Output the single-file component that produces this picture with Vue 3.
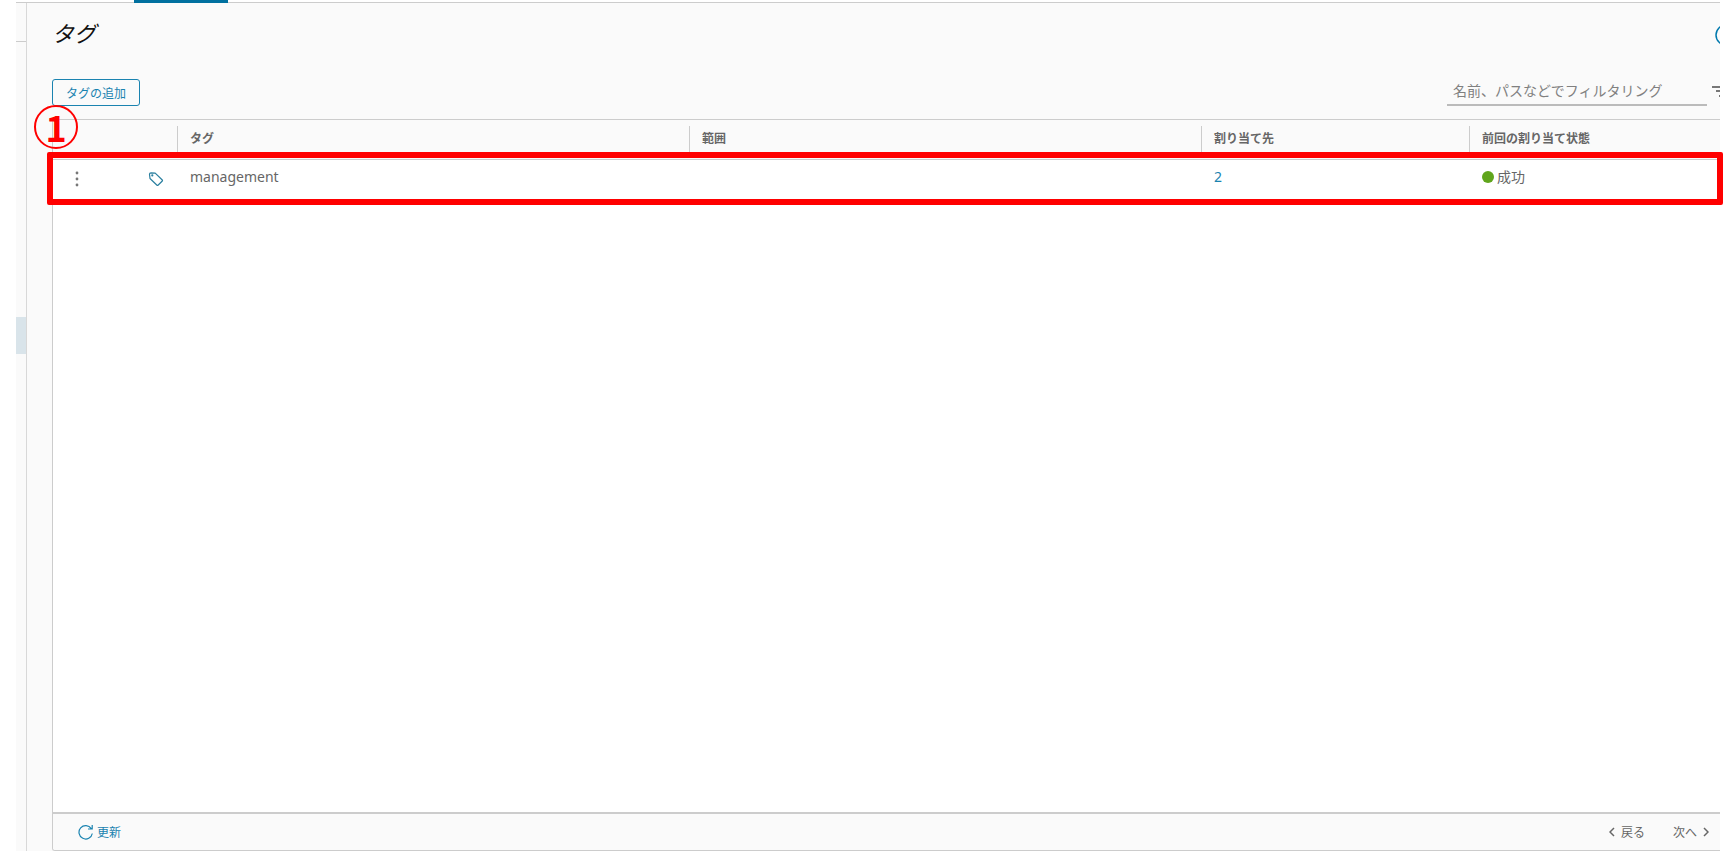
<script setup>
import { ref } from 'vue'

const filter = ref('')
const rows = [{ name: 'management', scope: '', assigned: 2, status: '成功' }]
</script>

<template>
  <div class="app">
    <nav class="tabs" aria-label="タブ">
      <span class="tab-active"></span>
    </nav>
    <div class="body">
      <aside class="side">
        <div class="side-head"></div>
        <div class="side-selected"></div>
      </aside>
      <main class="main">
        <header class="title-bar">
          <h1>タグ</h1>
          <button class="help" type="button" aria-label="ヘルプ">
            <svg width="22" height="22" viewBox="0 0 22 22" fill="none" stroke="#0079ad" stroke-width="1.5">
              <circle cx="11" cy="11" r="10" />
              <path d="M8 8.500a3 3 0 1 1 4.500 2.500c-1 .6-1.500 1-1.500 2.300M11 15v1.500" />
            </svg>
          </button>
        </header>
        <div class="toolbar">
          <button class="add" type="button">タグの追加</button>
          <div class="filter">
            <input v-model="filter" type="text" aria-label="フィルタ" placeholder="名前、パスなどでフィルタリング" />
            <button class="filter-btn" type="button" aria-label="フィルタ条件">
              <svg width="18" height="12" viewBox="0 0 18 12" stroke="#777" stroke-width="2">
                <path d="M0 1h18M4 5h10M7 10h4" />
              </svg>
            </button>
          </div>
        </div>
        <section class="grid">
          <table>
            <colgroup>
              <col class="c-action" />
              <col />
              <col />
              <col class="c-assigned" />
              <col class="c-status" />
            </colgroup>
            <thead>
              <tr>
                <td></td>
                <th scope="col"><span>タグ</span></th>
                <th scope="col"><span>範囲</span></th>
                <th scope="col"><span>割り当て先</span></th>
                <th scope="col"><span>前回の割り当て状態</span></th>
              </tr>
            </thead>
            <tbody>
              <tr v-for="row in rows" :key="row.name">
                <td>
                  <div class="actions">
                    <button type="button" aria-label="操作">
                      <svg width="4" height="16" viewBox="0 0 4 16" fill="#777">
                        <circle cx="2" cy="2" r="1.400" />
                        <circle cx="2" cy="8" r="1.400" />
                        <circle cx="2" cy="14" r="1.400" />
                      </svg>
                    </button>
                    <svg width="16" height="16" viewBox="0 0 16 16" fill="none" stroke="#2a7f9f" stroke-width="1.200" stroke-linejoin="round">
                      <path d="M1.500 3.300Q1.500 1.800 3 1.800L7.200 2.100L14.300 9Q14.800 9.500 14.300 10L10 14.200Q9.500 14.600 9 14.200L2 7.500Z" />
                      <circle cx="4.300" cy="4.400" r=".5" />
                    </svg>
                  </div>
                </td>
                <td>{{ row.name }}</td>
                <td>{{ row.scope }}</td>
                <td><a href="#">{{ row.assigned }}</a></td>
                <td><span class="status"><i class="dot"></i>{{ row.status }}</span></td>
              </tr>
            </tbody>
          </table>
          <footer class="foot">
            <button class="refresh" type="button">
              <svg width="16" height="16" viewBox="0 0 16 16" fill="none" stroke="#1a83b0" stroke-width="1.200">
                <path d="M14.300 9.500A6.700 6.700 0 1 1 13.300 4.600M14.200 1V5H10" />
              </svg>
              更新
            </button>
            <div class="pager">
              <button type="button">
                <svg width="6" height="10" viewBox="0 0 6 10" fill="none" stroke="#666" stroke-width="1.500"><path d="M5 1L1 5L5 9" /></svg>
                戻る
              </button>
              <button type="button">
                次へ
                <svg width="6" height="10" viewBox="0 0 6 10" fill="none" stroke="#666" stroke-width="1.500"><path d="M1 1L5 5L1 9" /></svg>
              </button>
            </div>
          </footer>
          <div class="callout"></div>
          <div class="callout-number">1</div>
        </section>
      </main>
    </div>
  </div>
</template>

<style>
html {
  overflow: hidden;
}
body {
  margin: 0;
  background: #fff;
}
</style>

<style scoped>
* {
  box-sizing: border-box;
}
.app {
  display: flex;
  flex-direction: column;
  height: 100vh;
  padding: 0 3px 0 16px;
  font-family: "Noto Sans", "Noto Sans CJK JP", sans-serif;
  font-size: 14px;
  color: #666;
}
button {
  display: inline-flex;
  align-items: center;
  padding: 0;
  border: 0;
  background: none;
  color: inherit;
  font: inherit;
  cursor: pointer;
}
svg {
  display: block;
  flex: none;
}
a {
  color: #1a83b0;
  text-decoration: none;
}
.tabs {
  height: 3px;
  padding-left: 118px;
  border-bottom: 1px solid #ccc;
}
.tab-active {
  display: block;
  width: 94px;
  height: 3px;
  background: #00709f;
}
.body {
  flex: 1;
  display: flex;
  min-height: 0;
  background: #fafafa;
}
.side {
  width: 11px;
  border-right: 1px solid #d8d8d8;
}
.side-head {
  height: 39px;
  border-bottom: 1px solid #ccc;
}
.side-selected {
  height: 37px;
  margin-top: 275px;
  background: #d9e4ea;
}
.main {
  flex: 1;
  display: flex;
  flex-direction: column;
  min-width: 0;
  padding-left: 25px;
}
.title-bar {
  display: flex;
  align-items: center;
  justify-content: space-between;
  height: 60px;
  overflow: hidden;
}
h1 {
  margin: 0;
  font-size: 22px;
  font-style: italic;
  font-weight: 400;
  line-height: 32px;
  color: #111;
}
.help {
  margin: 4px -17px 0 0;
}
.toolbar {
  display: flex;
  justify-content: space-between;
  height: 56px;
  padding-top: 14px;
  overflow: hidden;
}
.add {
  height: 27px;
  margin-top: 2px;
  padding: 0 13px;
  border: 1px solid #1a83b0;
  border-radius: 3px;
  color: #1a83b0;
  font-size: 12px;
}
.filter {
  display: flex;
  align-items: flex-start;
  gap: 5px;
  height: 30px;
  margin-right: -10px;
}
.filter-btn {
  margin-top: 9px;
}
input {
  width: 260px;
  height: 29px;
  padding: 0 6px;
  border: 0;
  border-bottom: 2px solid #bbb;
  background: none;
  color: #666;
  font: inherit;
  outline: 0;
}
input::placeholder {
  color: #808080;
}
.grid {
  position: relative;
  flex: 1;
  display: flex;
  flex-direction: column;
  border: 1px solid #ccc;
  border-right: 0;
  border-radius: 3px 0 0 3px;
  background: #fff;
}
table {
  width: 100%;
  table-layout: fixed;
  border-collapse: collapse;
}
.c-action {
  width: 124px;
}
.c-assigned {
  width: 268px;
}
.c-status {
  width: 251px;
}
thead tr {
  height: 39px;
  background: #fafafa;
  border-bottom: 1px solid #ccc;
}
th {
  padding: 0;
  text-align: left;
  font-size: 12px;
  font-weight: 700;
}
th span {
  display: block;
  height: 26px;
  padding-left: 12px;
  border-left: 1px solid #ccc;
  line-height: 26px;
}
td {
  padding: 0;
}
tbody tr {
  height: 35px;
}
tbody td {
  padding-left: 13px;
}
.actions {
  display: flex;
  justify-content: space-between;
  padding: 4px 13px 0 9px;
}
.status {
  display: flex;
  align-items: center;
  gap: 3px;
  line-height: 20px;
}
.dot {
  width: 12px;
  height: 12px;
  border-radius: 50%;
  background: #60a51c;
}
.foot {
  display: flex;
  align-items: center;
  justify-content: space-between;
  height: 38px;
  margin-top: auto;
  padding: 0 11px 0 25px;
  border-top: 2px solid #ccc;
  border-radius: 0 0 0 2px;
  background: #fafafa;
  font-size: 12px;
}
.refresh {
  gap: 3px;
  color: #1a83b0;
}
.pager {
  display: flex;
  gap: 28px;
}
.pager button {
  gap: 6px;
}
.callout {
  position: absolute;
  top: 32px;
  left: -6px;
  right: -3px;
  height: 53px;
  border: 6px solid #f00;
  border-radius: 2px;
}
.callout-number {
  position: absolute;
  top: -15px;
  left: -19px;
  width: 44px;
  height: 44px;
  border: 2px solid #f00;
  border-radius: 50%;
  color: #f00;
  font-family: "Noto Sans CJK JP", sans-serif;
  font-size: 36px;
  font-weight: 700;
  line-height: 38px;
  text-align: center;
}
</style>
